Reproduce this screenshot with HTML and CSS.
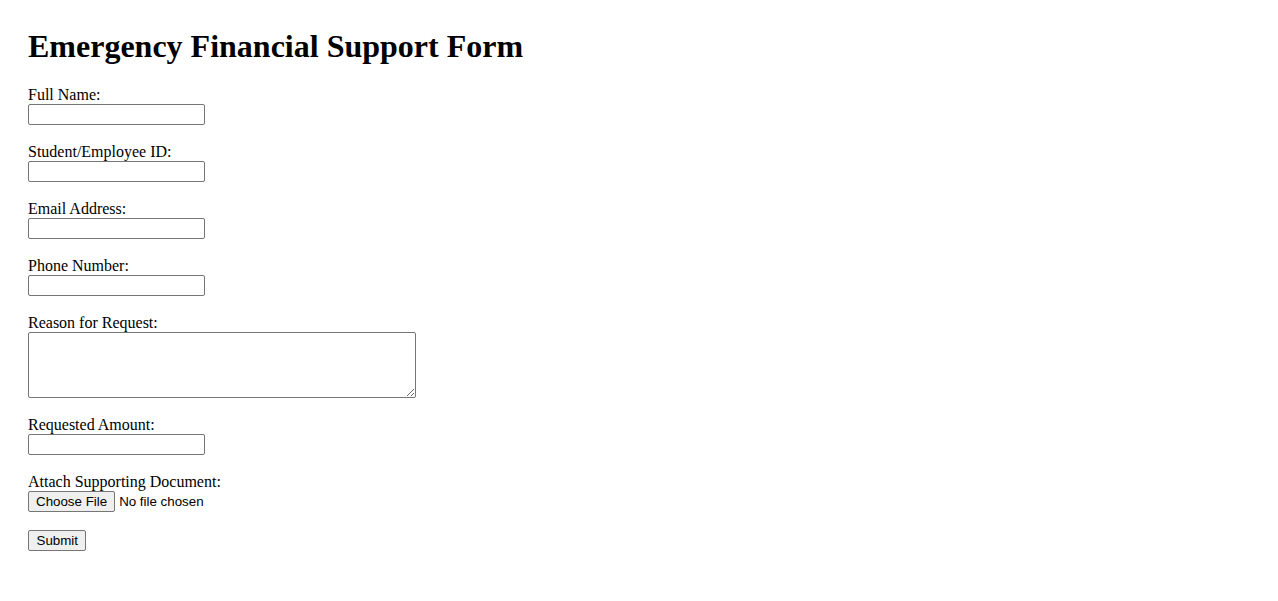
FILE: index.html
```html
<!DOCTYPE html>
<html>
<head>
<meta charset="utf-8">
<title>Emergency Financial Support Form</title>
<link rel="stylesheet" href="styles.css">
</head>
<body>
<h1 class="title">Emergency Financial Support Form</h1>
<form class="form">
<label for="name">Full Name:</label><br>
<input class="field" type="text" id="name"><br><br>
<label for="sid">Student/Employee ID:</label><br>
<input class="field" type="text" id="sid"><br><br>
<label for="email">Email Address:</label><br>
<input class="field" type="email" id="email"><br><br>
<label for="phone">Phone Number:</label><br>
<input class="field" type="tel" id="phone"><br><br>
<label for="reason">Reason for Request:</label><br>
<textarea class="area" id="reason"></textarea><br><br>
<label for="amount">Requested Amount:</label><br>
<input class="field" type="number" id="amount"><br><br>
<label for="doc">Attach Supporting Document:</label><br>
<input class="file" type="file" id="doc"><br><br>
<input class="submit" type="submit" value="Submit">
</form>
</body>
</html>
```
FILE: styles.css
```css
body {
  margin: 28px;
  font-family: "Liberation Serif", "Times New Roman", serif;
  font-size: 16px;
  color: #000;
  background: #fff;
}
.title {
  font-size: 32px;
  font-weight: bold;
  margin: 0 0 21.44px 0;
}
.form {
  margin: 0;
}
.field {
  box-sizing: border-box;
  width: 177px;
  height: 21px;
  margin: 0;
  padding: 1px 2px;
  border: 1px solid #767676;
  border-radius: 2px;
  font-family: "Liberation Sans", Arial, sans-serif;
  font-size: 13.33px;
  background: #fff;
}
.field::-webkit-outer-spin-button,
.field::-webkit-inner-spin-button {
  -webkit-appearance: none;
  margin: 0;
}
.area {
  box-sizing: border-box;
  width: 388px;
  height: 66px;
  margin: 0;
  padding: 2px;
  border: 1px solid #767676;
  border-radius: 2px;
  font-family: "Liberation Mono", monospace;
  font-size: 13.33px;
  vertical-align: bottom;
}
.file {
  font-family: "Liberation Sans", Arial, sans-serif;
  font-size: 13.33px;
  margin: 0;
  color: #000;
}
.file::file-selector-button {
  font-family: "Liberation Sans", Arial, sans-serif;
  font-size: 13.33px;
  height: 21px;
  padding: 1px 7px;
  margin: 0 4px 0 0;
  border: 1px solid #767676;
  border-radius: 2px;
  background: #efefef;
  color: #000;
}
.submit {
  font-family: "Liberation Sans", Arial, sans-serif;
  font-size: 13.33px;
  height: 21px;
  padding: 1px 7.5px;
  margin: 0;
  border: 1px solid #767676;
  border-radius: 2px;
  background: #efefef;
  color: #000;
}
```
